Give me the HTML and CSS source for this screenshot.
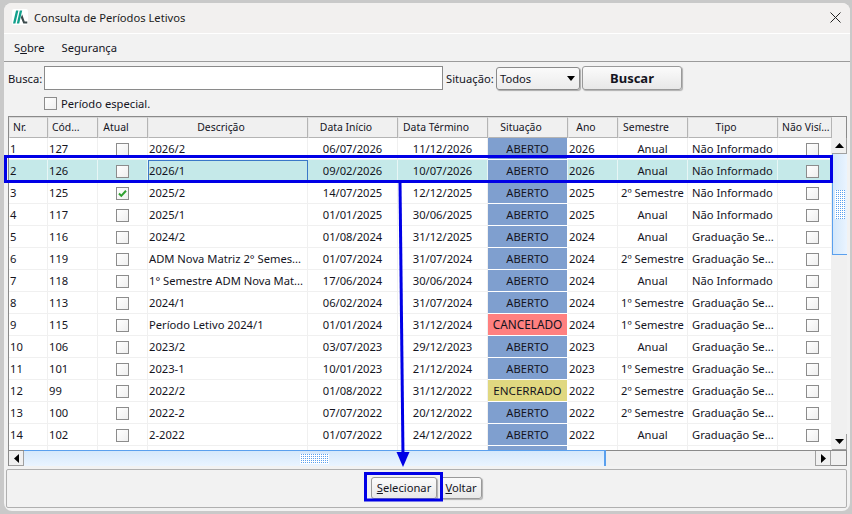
FILE: index.html
```html
<!DOCTYPE html>
<html lang="pt-BR">
<head>
<meta charset="utf-8">
<title>Consulta de Períodos Letivos</title>
<link rel="stylesheet" href="styles.css">
</head>
<body>
<div class="window">
  <header class="titlebar">
    <span class="logo"><svg width="16" height="16" viewBox="0 0 16 16"><path d="M1 14.500 4 1.500h2.400L3.400 14.500zM4.800 14.500 7.800 1.500h2.400L7.200 14.500z" fill="#12a08c"/><path d="M10.200 5.500 12.700 12.600h2.600v1.900h-4L8.800 8.500z" fill="#3c4a4c"/></svg></span>
    <span class="title">Consulta de Períodos Letivos</span>
    <svg class="close" width="11" height="11" viewBox="0 0 11 11"><path d="M.5.5l10 10M10.500.5l-10 10" stroke="#222" stroke-width="1" fill="none"/></svg>
  </header>
  <nav class="menubar"><span>S<u>o</u>bre</span><span>Segurança</span></nav>
  <section class="search">
    <div class="search-row">
      <label class="lbl-busca">Busca:</label>
      <div class="input"></div>
      <label class="lbl-sit">Situação:</label>
      <div class="select">Todos<i class="caret"></i></div>
      <div class="btn btn-buscar">Buscar</div>
    </div>
    <div class="special"><i class="cb"></i><span>Período especial.</span></div>
  </section>
  <section class="grid">
    <div class="grid-main">
      <div class="table-wrap">
        <table>
          <colgroup><col class="w39"><col class="w50"><col class="w50"><col class="w160"><col class="w90"><col class="w90"><col class="w80"><col class="w50"><col class="w70"><col class="w90"><col class="w54"></colgroup>
          <thead><tr><th class="hl">Nr.</th><th class="hl">Cód...</th><th>Atual</th><th>Descrição</th><th>Data Início</th><th>Data Término</th><th>Situação</th><th>Ano</th><th>Semestre</th><th>Tipo</th><th class="hl">Não Visí...</th></tr></thead>
          <tbody>
            <tr><td>1</td><td>127</td><td class="c"><i class="cb"></i></td><td>2026/2</td><td class="c">06/07/2026</td><td class="c">11/12/2026</td><td class="c open">ABERTO</td><td>2026</td><td class="c">Anual</td><td class="t">Não Informado</td><td class="c"><i class="cb"></i></td></tr>
            <tr class="sel"><td>2</td><td>126</td><td class="c"><i class="cb"></i></td><td class="focus">2026/1</td><td class="c">09/02/2026</td><td class="c">10/07/2026</td><td class="c open">ABERTO</td><td>2026</td><td class="c">Anual</td><td class="t">Não Informado</td><td class="c"><i class="cb"></i></td></tr>
            <tr><td>3</td><td>125</td><td class="c"><i class="cb on"><svg width="11" height="11" viewBox="0 0 11 11"><path d="M2 5.500l2.300 2.400L9 2.800" stroke="#2ea02e" stroke-width="2" fill="none"/></svg></i></td><td>2025/2</td><td class="c">14/07/2025</td><td class="c">12/12/2025</td><td class="c open">ABERTO</td><td>2025</td><td class="c">2º Semestre</td><td class="t">Não Informado</td><td class="c"><i class="cb"></i></td></tr>
            <tr><td>4</td><td>117</td><td class="c"><i class="cb"></i></td><td>2025/1</td><td class="c">01/01/2025</td><td class="c">30/06/2025</td><td class="c open">ABERTO</td><td>2025</td><td class="c">Anual</td><td class="t">Não Informado</td><td class="c"><i class="cb"></i></td></tr>
            <tr><td>5</td><td>116</td><td class="c"><i class="cb"></i></td><td>2024/2</td><td class="c">01/08/2024</td><td class="c">31/12/2025</td><td class="c open">ABERTO</td><td>2024</td><td class="c">Anual</td><td class="t">Graduação Se...</td><td class="c"><i class="cb"></i></td></tr>
            <tr><td>6</td><td>119</td><td class="c"><i class="cb"></i></td><td>ADM Nova Matriz 2° Semes...</td><td class="c">01/07/2024</td><td class="c">31/07/2024</td><td class="c open">ABERTO</td><td>2024</td><td class="c">2º Semestre</td><td class="t">Graduação Se...</td><td class="c"><i class="cb"></i></td></tr>
            <tr><td>7</td><td>118</td><td class="c"><i class="cb"></i></td><td>1° Semestre ADM Nova Mat...</td><td class="c">17/06/2024</td><td class="c">30/06/2024</td><td class="c open">ABERTO</td><td>2024</td><td class="c">Anual</td><td class="t">Não Informado</td><td class="c"><i class="cb"></i></td></tr>
            <tr><td>8</td><td>113</td><td class="c"><i class="cb"></i></td><td>2024/1</td><td class="c">06/02/2024</td><td class="c">31/07/2024</td><td class="c open">ABERTO</td><td>2024</td><td class="c">1º Semestre</td><td class="t">Graduação Se...</td><td class="c"><i class="cb"></i></td></tr>
            <tr><td>9</td><td>115</td><td class="c"><i class="cb"></i></td><td>Período Letivo 2024/1</td><td class="c">01/01/2024</td><td class="c">31/12/2024</td><td class="c canc">CANCELADO</td><td>2024</td><td class="c">1º Semestre</td><td class="t">Graduação Se...</td><td class="c"><i class="cb"></i></td></tr>
            <tr><td>10</td><td>106</td><td class="c"><i class="cb"></i></td><td>2023/2</td><td class="c">03/07/2023</td><td class="c">29/12/2023</td><td class="c open">ABERTO</td><td>2023</td><td class="c">Anual</td><td class="t">Graduação Se...</td><td class="c"><i class="cb"></i></td></tr>
            <tr><td>11</td><td>101</td><td class="c"><i class="cb"></i></td><td>2023-1</td><td class="c">10/01/2023</td><td class="c">21/12/2024</td><td class="c open">ABERTO</td><td>2023</td><td class="c">1º Semestre</td><td class="t">Graduação Se...</td><td class="c"><i class="cb"></i></td></tr>
            <tr><td>12</td><td>99</td><td class="c"><i class="cb"></i></td><td>2022/2</td><td class="c">01/08/2022</td><td class="c">31/12/2022</td><td class="c enc">ENCERRADO</td><td>2022</td><td class="c">2º Semestre</td><td class="t">Graduação Se...</td><td class="c"><i class="cb"></i></td></tr>
            <tr><td>13</td><td>100</td><td class="c"><i class="cb"></i></td><td>2022-2</td><td class="c">07/07/2022</td><td class="c">20/12/2022</td><td class="c open">ABERTO</td><td>2022</td><td class="c">2º Semestre</td><td class="t">Graduação Se...</td><td class="c"><i class="cb"></i></td></tr>
            <tr><td>14</td><td>102</td><td class="c"><i class="cb"></i></td><td>2-2022</td><td class="c">01/07/2022</td><td class="c">24/12/2022</td><td class="c open">ABERTO</td><td>2022</td><td class="c">Anual</td><td class="t">Graduação Se...</td><td class="c"><i class="cb"></i></td></tr>
            <tr><td></td><td></td><td></td><td></td><td></td><td></td><td class="open"></td><td></td><td></td><td></td><td></td></tr>
          </tbody>
        </table>
      </div>
      <div class="vscroll">
        <div class="sb-btn"><svg width="9" height="5" viewBox="0 0 9 5"><path d="M4.500 0 9 5H0z" fill="#000"/></svg></div>
        <div class="v-thumb"><i class="dots"></i></div>
        <div class="v-track"></div>
        <div class="sb-btn"><svg width="9" height="5" viewBox="0 0 9 5"><path d="M4.500 5 9 0H0z" fill="#000"/></svg></div>
      </div>
    </div>
    <div class="hscroll">
      <div class="sb-btn h"><svg width="5" height="9" viewBox="0 0 5 9"><path d="M0 4.500 5 0v9z" fill="#000"/></svg></div>
      <div class="h-thumb"><i class="dots"></i></div>
      <div class="h-track"></div>
      <div class="sb-btn h"><svg width="5" height="9" viewBox="0 0 5 9"><path d="M5 4.500 0 0v9z" fill="#000"/></svg></div>
      <div class="corner"></div>
    </div>
  </section>
  <footer class="actions">
    <div class="btn btn-sel"><u>S</u>elecionar</div>
    <div class="btn btn-vol"><u>V</u>oltar</div>
  </footer>
</div>
<svg class="marks" width="852" height="514" viewBox="0 0 852 514">
  <rect x="5.500" y="156.500" width="826" height="25" fill="none" stroke="#0000e6" stroke-width="3"/>
  <path d="M400 182 403 456" stroke="#0000e6" stroke-width="3" fill="none"/>
  <path d="M396.500 452H409.500L403 467z" fill="#0000e6"/>
  <rect x="365.500" y="473.500" width="76" height="26.500" fill="none" stroke="#0000e6" stroke-width="3"/>
</svg>
</body>
</html>
```

FILE: styles.css
```css
* { box-sizing: border-box; }
html, body { margin: 0; height: 100%; }
body {
  position: relative;
  width: 852px;
  height: 514px;
  overflow: hidden;
  background: #c9c9c9;
  font: 11.200px "Noto Sans", "Open Sans", sans-serif;
  color: #14141e;
  padding: 3px 2px 3px 4px;
}
i { font-style: normal; display: inline-block; }
.window {
  width: 846px;
  height: 508px;
  background: #f2f2f2;
  border-radius: 8px;
  overflow: hidden;
  display: flex;
  flex-direction: column;
}
.titlebar {
  height: 31px;
  flex: none;
  background: #f2f0ef;
  border-bottom: 1px solid #fff;
  display: flex;
  align-items: center;
  padding: 0 9px 2px 8px;
}
.logo { width: 16px; height: 16px; background: #fff; border-radius: 2px; display: flex; }
.title { margin-left: 6px; flex: 1; color: #222; }
.close { flex: none; }
.menubar {
  height: 28px;
  flex: none;
  display: flex;
  gap: 17px;
  align-items: center;
  padding: 0 0 0 10px;
  border-bottom: 1px solid #9b9b9b;
}
.search { flex: none; height: 54px; padding-top: 4px; }
.search-row { display: flex; align-items: center; height: 24px; }
.lbl-busca { width: 40px; padding-left: 4px; }
.input { width: 399px; height: 24px; background: #fff; border: 1px solid #8a8a8a; }
.lbl-sit { width: 53px; padding-left: 3px; white-space: nowrap; }
.select {
  width: 84px;
  height: 23px;
  border: 1px solid #8a8a8a;
  border-radius: 3px;
  background: linear-gradient(#fafafa, #ececec);
  padding: 0 0 0 3px;
  line-height: 21px;
  position: relative;
  box-shadow: 1px 1px 1px #aaa;
}
.caret {
  position: absolute;
  right: 4px;
  top: 8px;
  border-top: 5px solid #000;
  border-left: 4px solid transparent;
  border-right: 4px solid transparent;
}
.btn {
  border: 1px solid #9a9a9a;
  border-radius: 3px;
  background: linear-gradient(#fbfbfb, #e8e8e8);
  box-shadow: 1px 1px 1px #b0b0b0;
  text-align: center;
}
.btn-buscar { margin-left: 2px; width: 100px; height: 24px; font-weight: 700; font-size: 13px; line-height: 22px; }
.special { display: flex; align-items: center; gap: 4px; margin: 7px 0 0 40px; height: 13px; }
.cb {
  width: 13px;
  height: 13px;
  border: 1px solid #8c8c8c;
  background: linear-gradient(135deg, #fff, #efefef);
  vertical-align: middle;
  flex: none;
  position: relative;
}
.cb svg { position: absolute; left: 0; top: 0; }
.grid {
  flex: none;
  margin-left: 4px;
  width: 839px;
  height: 350px;
  border: 1px solid #8a8a8a;
  background: #f0f0f0;
  display: flex;
  flex-direction: column;
}
.grid-main { display: flex; height: 333px; flex: none; }
.table-wrap { width: 823px; height: 333px; overflow: hidden; background: #fff; flex: none; }
table { border-collapse: separate; border-spacing: 0; table-layout: fixed; width: 823px; }
.w39 { width: 39px; } .w50 { width: 50px; } .w54 { width: 54px; } .w70 { width: 70px; }
.w80 { width: 80px; } .w90 { width: 90px; } .w160 { width: 160px; }
th {
  height: 21px;
  padding: 0 14px 1px 0;
  font-weight: 400;
  font-size: 10.400px;
  background: #f0f0f0;
  border: 1px solid #b4b4b4;
  border-top-color: #d8d8d8;
  border-left-color: #e8e8e8;
  white-space: nowrap;
  overflow: hidden;
  text-align: center;
}
th.hl { text-align: left; padding: 0 0 1px 3px; }
td {
  height: 22px;
  padding: 0 1px 1px;
  border-bottom: 1px solid #f0f0f0;
  border-right: 1px solid #f0f0f0;
  white-space: nowrap;
  overflow: hidden;
  background: #fff;
}
td.c { text-align: center; }
td.t { padding-left: 4px; }
td:last-child { padding-left: 17px; }
td.open { background: #7f9fcf; border-bottom-color: #fff; border-right-color: #fff; }
td.canc { background: #ff8080; border-bottom-color: #fff; border-right-color: #fff; font-size: 11.800px; }
td.enc { background: #e0d880; border-bottom-color: #fff; border-right-color: #fff; font-size: 11.600px; }
.sel td { background: #c5e9e9; border-right-color: #e8f6f6; }
.sel td.open { background: #7f9fcf; }
.sel td.focus { border: 1px solid #3a78c8; padding-left: 0; }
.vscroll { width: 15px; flex: none; padding-top: 21px; display: flex; flex-direction: column; }
.sb-btn {
  width: 15px;
  height: 16px;
  flex: none;
  background: #f0f0f0;
  border: 1px solid #a0a0a0;
  border-width: 0 1px 1px 0;
  display: flex;
  align-items: center;
  justify-content: center;
}
.v-thumb {
  height: 101px;
  flex: none;
  background: linear-gradient(90deg, #d4e8fb, #eaf4ff);
  border-left: 1px solid #5aa0ee;
  border-bottom: 1px solid #5aa0ee;
  display: flex;
  align-items: center;
  justify-content: center;
}
.v-track { flex: 1; background: #f0f0f0; }
.dots {
  width: 10px;
  height: 29px;
  background:
    linear-gradient(90deg, #fff 1px, transparent 1px) 0 0 / 2px 2px,
    linear-gradient(#5aa0ee 1px, #fff 1px) 0 0 / 2px 2px;
}
.hscroll { height: 16px; display: flex; flex: none; border-top: 1px solid #8a8a8a; }
.sb-btn.h { width: 15px; height: 15px; }
.h-thumb {
  width: 582px;
  background: linear-gradient(#d4e8fb, #eaf4ff);
  border-top: 1px solid #5aa0ee;
  margin-top: -1px;
  border-right: 2px solid #5aa0ee;
  display: flex;
  align-items: center;
  justify-content: center;
  flex: none;
}
.h-thumb .dots { width: 29px; height: 10px; }
.h-track { flex: 1; background: #f0f0f0; border-right: 1px solid #a0a0a0; }
.corner { width: 15px; flex: none; }
.actions {
  flex: none;
  margin: 3px 0 0 2px;
  width: 841px;
  height: 39px;
  border: 1px solid #b0b0b0;
  border-radius: 2px;
  display: flex;
  justify-content: flex-end;
  padding: 7px 364px 0 0;
  gap: 3px;
}
.actions .btn { height: 22px; line-height: 20px; }
.btn-sel { width: 66px; }
.btn-vol { width: 42px; }
.marks { position: absolute; left: 0; top: 0; pointer-events: none; }
```
